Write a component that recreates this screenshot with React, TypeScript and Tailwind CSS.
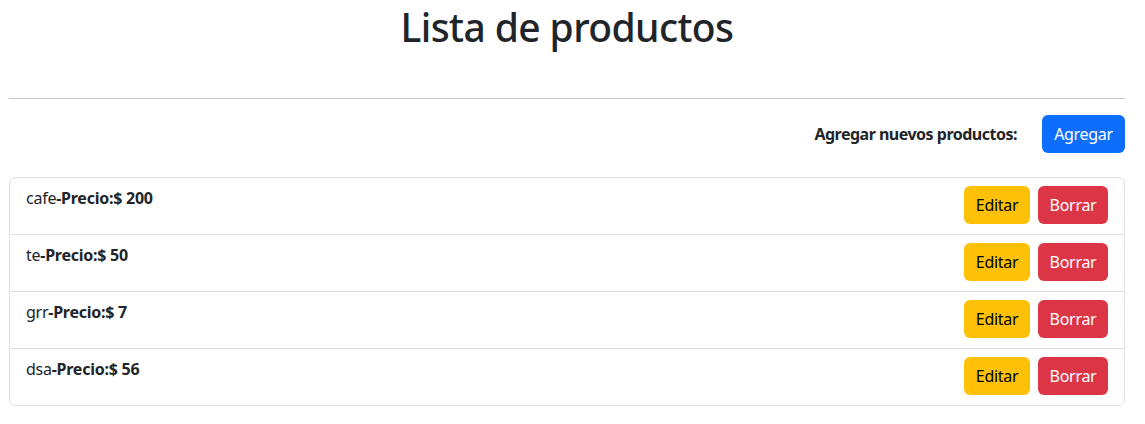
import React from "react";

const items = [
  { name: "cafe", price: 200 },
  { name: "te", price: 50 },
  { name: "grr", price: 7 },
  { name: "dsa", price: 56 },
];

export default function App() {
  return (
    <div
      className="w-[1145px] h-[424px] bg-white text-[#212529] text-[16px] leading-[24px]"
      style={{ fontFamily: '"Noto Sans", "Open Sans", sans-serif' }}
    >
      <div className="ml-[9px] w-[1116px]">
        <h1 className="pt-[3px] text-center text-[39px] leading-[48px] font-medium tracking-[-0.6px]">Lista de productos</h1>
        <hr className="mt-[47px] mb-[16px] border-t border-[#c8c8c8]" />
        <div className="flex items-center justify-end gap-[25px]">
          <span className="font-bold tracking-[-0.5px]">Agregar nuevos productos:</span>
          <button className="w-[83px] h-[38px] rounded-[6px] bg-[#0d6efd] text-white tracking-[-0.3px]">Agregar</button>
        </div>
        <div className="mt-[24px] rounded-[6px] border border-[#dee2e6]">
          {items.map((it, i) => (
            <div
              key={it.name}
              className={`flex items-start justify-between px-4 pt-2 h-[56px] ${i > 0 ? "border-t border-[#dee2e6] h-[57px]" : ""}`}
            >
              <div className="tracking-[-0.25px]">
                {it.name}
                <span className="font-bold">-Precio:$ {it.price}</span>
              </div>
              <div className="flex gap-2">
                <button className="w-[66px] h-[38px] rounded-[6px] bg-[#ffc107] text-black tracking-[-0.3px]">Editar</button>
                <button className="w-[70px] h-[38px] rounded-[6px] bg-[#dc3545] text-white tracking-[-0.3px]">Borrar</button>
              </div>
            </div>
          ))}
        </div>
      </div>
    </div>
  );
}
